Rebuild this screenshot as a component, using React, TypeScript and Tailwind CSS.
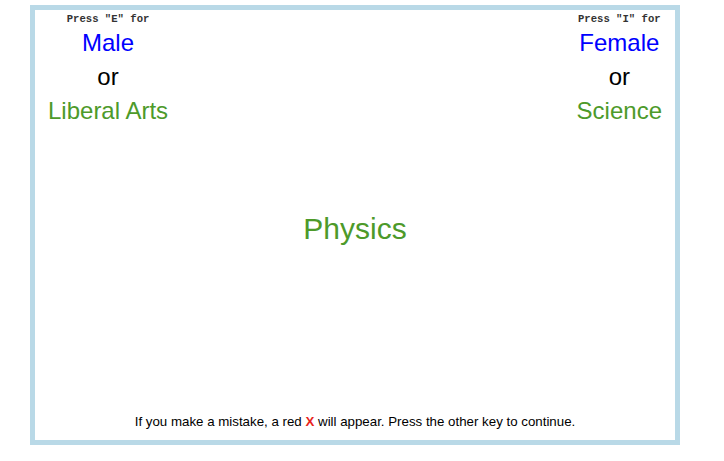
export default function App() {
  const sans = { fontFamily: '"Liberation Sans", Arial, Helvetica, sans-serif' };
  const mono = { fontFamily: '"Liberation Mono", "Courier New", monospace' };

  return (
    <div className="w-[724px] h-[461px] bg-white pl-[30px] pt-[5px]" style={sans}>
      <div className="flex h-[440px] w-[650px] flex-col border-[5px] border-[#b9d9e7] bg-white">
        {/* key labels */}
        <div className="flex justify-between px-[13px] pt-[2px]">
          <div className="flex flex-col items-center">
            <div className="text-[10.6px] font-bold leading-[14px] text-[#333]" style={mono}>
              Press "E" for
            </div>
            <div className="text-[24px] leading-[34px] text-[#0000ff]">Male</div>
            <div className="text-[24px] leading-[34px] text-black">or</div>
            <div className="text-[24px] leading-[34px] text-[#4d9a2a]">Liberal Arts</div>
          </div>
          <div className="flex flex-col items-center">
            <div className="text-[10.6px] font-bold leading-[14px] text-[#333]" style={mono}>
              Press "I" for
            </div>
            <div className="text-[24px] leading-[34px] text-[#0000ff]">Female</div>
            <div className="text-[24px] leading-[34px] text-black">or</div>
            <div className="text-[24px] leading-[34px] text-[#4d9a2a]">Science</div>
          </div>
        </div>

        {/* stimulus */}
        <div className="mt-[83px] text-center text-[30px] leading-[36px] text-[#4d9a2a]">Physics</div>

        <div className="flex-1" />

        {/* instructions */}
        <div className="pb-[8px] text-center text-[13.3px] leading-[20px] text-black">
          If you make a mistake, a red <span className="font-bold text-[#e8231b]">X</span> will appear. Press the other key to continue.
        </div>
      </div>
    </div>
  );
}
